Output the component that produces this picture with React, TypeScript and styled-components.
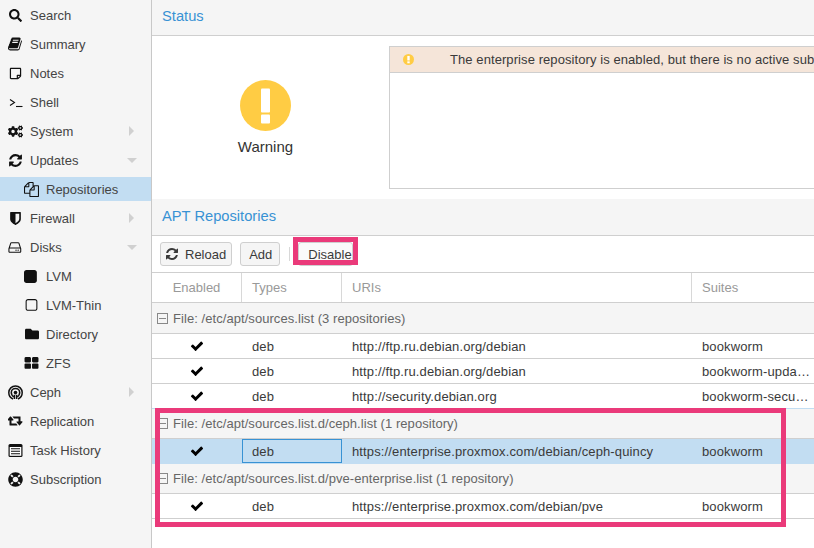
import React from 'react';
import styled, { createGlobalStyle } from 'styled-components';
import { FaSearch, FaRegStickyNote, FaCogs, FaFolder, FaLifeRing } from 'react-icons/fa';

const GlobalStyle = createGlobalStyle`
  html, body {
    margin: 0;
    height: 100%;
    overflow: hidden;
    background: #fff;
    font-family: "Liberation Sans", Arial, sans-serif;
    font-size: 13px;
    color: #3a3a3a;
  }
`;

const BOOK =
  'M1639 478q40 57 18 129l-275 906q-19 64-76.5 107.5t-122.5 43.5h-923q-77 0-148.5-53.5t-99.5-131.5q-24-67-2-127 0-4 3-27t4-37q1-8-3-21.5t-3-19.5q2-11 8-21t16.5-23.5 16.5-23.5q23-38 45-91.5t30-91.5q3-10 .5-30t-.5-28q3-11 17-28t17-23q21-36 42-92t25-90q1-9-2.5-32t.5-28q4-13 22-30.5t22-22.5q19-26 42.5-84.5t27.5-96.5q1-8-3-25.5t-2-26.5q2-8 9-18t18-23 17-21q8-12 16.5-30.5t15-35 16-36 19.5-32 26.5-23.5 36-11.5 47.5 5.5l-1 3q38-9 51-9h761q74 0 114 56t18 130l-274 906q-36 119-71.5 153.5t-128.5 34.5h-869q-27 0-38 15-11 16-1 43 24 70 144 70h923q29 0 56-15.5t35-41.5l300-987q7-22 5-57 38 15 59 43zm-1064 2q-4 13 2 22.5t20 9.5h608q13 0 25.5-9.5t16.5-22.5l21-64q4-13-2-22.5t-20-9.5h-608q-13 0-25.5 9.5t-16.5 22.5zm-83 256q-4 13 2 22.5t20 9.5h608q13 0 25.5-9.5t16.5-22.5l21-64q4-13-2-22.5t-20-9.5h-608q-13 0-25.5 9.5t-16.5 22.5z';
const REFRESH =
  'M1639 1056q0 5-1 7-64 268-268 434.5t-478 166.5q-146 0-282.5-55t-243.5-157l-129 129q-19 19-45 19t-45-19-19-45v-448q0-26 19-45t45-19h448q26 0 45 19t19 45-19 45l-137 137q71 66 161 102t187 36q134 0 250-65t186-179q11-17 53-117 8-23 30-23h192q13 0 22.5 9.5t9.5 22.5zm25-800v448q0 26-19 45t-45 19h-448q-26 0-45-19t-19-45 19-45l138-138q-148-137-349-137-134 0-250 65t-186 179q-11 17-53 117-8 23-30 23h-199q-13 0-22.5-9.5t-9.5-22.5v-7q65-268 270-434.5t480-166.5q146 0 284 55.5t245 156.5l130-129q19-19 45-19t45 19 19 45z';
const CHECK =
  'M1671 566q0 40-28 68l-724 724-136 136q-28 28-68 28t-68-28l-136-136-362-362q-28-28-28-68t28-68l136-136q28-28 68-28t68 28l294 295 656-657q28-28 68-28t68 28l136 136q28 28 28 68z';
const SHIELD =
  'M1344 960v-640h-448v1137q119-63 213-137 235-184 235-360zm192-768v768q0 86-33.5 170.5t-83 150-118 127.5-126.5 103-121 77.5-89.5 49.5-42.5 20q-12 6-26 6t-26-6q-16-7-42.5-20t-89.5-49.5-121-77.5-126.5-103-118-127.5-83-150-33.5-170.5v-768q0-26 19-45t45-19h1152q26 0 45 19t19 45z';
const FILES =
  'M1696 384q40 0 68 28t28 68v1216q0 40-28 68t-68 28h-960q-40 0-68-28t-28-68v-288h-544q-40 0-68-28t-28-68v-672q0-40 20-88t48-76l408-408q28-28 76-48t88-20h416q40 0 68 28t28 68v328q68-40 128-40h416zm-544 213l-299 299h299v-299zm-640-384l-299 299h299v-299zm196 647l316-316v-416h-384v416q0 40-28 68t-68 28h-416v640h512v-256q0-40 20-88t48-76zm956 804v-1152h-384v416q0 40-28 68t-68 28h-416v640h896z';
const HDD =
  'M1040 1216q0 33-23.5 56.5t-56.5 23.5-56.5-23.5-23.5-56.5 23.5-56.5 56.5-23.5 56.5 23.5 23.5 56.5zm256 0q0 33-23.5 56.5t-56.5 23.5-56.5-23.5-23.5-56.5 23.5-56.5 56.5-23.5 56.5 23.5 23.5 56.5zm160 160v-320q0-13-9.5-22.5t-22.5-9.5h-1216q-13 0-22.5 9.5t-9.5 22.5v320q0 13 9.5 22.5t22.5 9.5h1216q13 0 22.5-9.5t9.5-22.5zm-1230-480h1180l-157-482q-4-13-16-21.5t-26-8.5h-782q-14 0-26 8.5t-16 21.5zm1358 160v320q0 66-47 113t-113 47h-1216q-66 0-113-47t-47-113v-320q0-25 16-75l197-606q17-53 63-86t101-33h782q55 0 101 33t63 86l197 606q16 50 16 75z';
const SQUARE =
  'M1536 416v960q0 119-84.5 203.5t-203.5 84.5h-960q-119 0-203.5-84.5t-84.5-203.5v-960q0-119 84.5-203.5t203.5-84.5h960q119 0 203.5 84.5t84.5 203.5z';
const SQUARE_O =
  'M1312 256h-832q-66 0-113 47t-47 113v832q0 66 47 113t113 47h832q66 0 113-47t47-113v-832q0-66-47-113t-113-47zm288 160v832q0 119-84.5 203.5t-203.5 84.5h-832q-119 0-203.5-84.5t-84.5-203.5v-832q0-119 84.5-203.5t203.5-84.5h832q119 0 203.5 84.5t84.5 203.5z';
const RETWEET =
  'M1216 1424q0 13-9.5 22.5t-22.5 9.5h-960q-8 0-13.5-2t-9-7-5.5-6.5-3.5-10-1.5-11.5v-600h-192q-26 0-45-19t-19-45q0-24 15-41l320-384q19-22 49-22t49 22l320 384q15 17 15 41 0 26-19 45t-45 19h-192v384h576q16 0 25 11l160 192q7 10 7 21zm640-416q0 24-15 41l-320 384q-20 23-49 23t-49-23l-320-384q-15-17-15-41 0-26 19-45t45-19h192v-384h-576q-16 0-25-12l-160-192q-7-9-7-20 0-13 9.5-22.5t22.5-9.5h960q8 0 13.5 2t9 7 5.5 6.5 3.5 10 1.5 11.5v600h192q26 0 45 19t19 45z';
const TH_LARGE =
  'M832 1024v384q0 52-38 90t-90 38h-512q-52 0-90-38t-38-90v-384q0-52 38-90t90-38h512q52 0 90 38t38 90zm0-768v384q0 52-38 90t-90 38h-512q-52 0-90-38t-38-90v-384q0-52 38-90t90-38h512q52 0 90 38t38 90zm896 768v384q0 52-38 90t-90 38h-512q-52 0-90-38t-38-90v-384q0-52 38-90t90-38h512q52 0 90 38t38 90zm0-768v384q0 52-38 90t-90 38h-512q-52 0-90-38t-38-90v-384q0-52 38-90t90-38h512q52 0 90 38t38 90z';

const Fa4 = ({ d, size, box = 1792 }: { d: string; size: number; box?: number }) => (
  <svg width={(size * box) / 1792} height={size} viewBox={`0 0 ${box} 1792`} fill="currentColor">
    <path d={d} />
  </svg>
);

const TerminalIcon = () => (
  <svg width="14" height="14" viewBox="0 0 14 14" fill="none" stroke="#111">
    <path d="M1 4.5 5.5 7.5 1 10.5" strokeWidth="1.1" />
    <path d="M7 11.5h6.5" strokeWidth="1.1" />
  </svg>
);

const CephIcon = () => (
  <svg width="15" height="15" viewBox="0 0 15 15" fill="none" stroke="#111" strokeWidth="1.5">
    <path d="M5 14C2.4 13 .8 10.5.8 7.6.8 3.9 3.8.9 7.5.9s6.7 3 6.7 6.7c0 2.9-1.6 5.4-4.2 6.4" />
    <path d="M5.8 11.8C4.3 11 3.3 9.4 3.3 7.6 3.3 5.3 5.2 3.4 7.5 3.4s4.2 1.9 4.2 4.2c0 1.8-1 3.4-2.5 4.2" />
    <path d="M6.4 14V9.8M8.6 14V9.8" />
    <circle cx="7.5" cy="7.6" r="1.8" fill="#111" stroke="none" />
  </svg>
);

const ListIcon = () => (
  <svg width="15" height="13" viewBox="0 0 15 13">
    <rect x="0.5" y="0" width="14" height="13" rx="1.5" fill="#111" />
    <rect x="1.7" y="3" width="11.6" height="8.8" fill="#fff" />
    <path d="M3 4.8h9M3 7.2h9M3 9.7h9" stroke="#111" strokeWidth="1.1" />
  </svg>
);

const Layout = styled.div`
  display: flex;
  width: 814px;
  height: 548px;
  overflow: hidden;
`;

const Sidebar = styled.nav`
  flex: 0 0 151px;
  box-sizing: border-box;
  padding-top: 3px;
  background: #f5f5f5;
`;

const NavRow = styled.div<{ $sub?: boolean; $selected?: boolean }>`
  position: relative;
  display: flex;
  align-items: center;
  height: 24px;
  margin-bottom: 5px;
  padding-left: ${(p) => (p.$sub ? '24px' : '8px')};
  background: ${(p) => (p.$selected ? '#c2ddf2' : 'transparent')};
  color: #444;
`;

const NavIcon = styled.span`
  flex: 0 0 15px;
  width: 15px;
  margin-right: 7px;
  display: flex;
  justify-content: center;
  align-items: center;
  color: #111;
  font-size: 13px;
`;

const ArrowRight = styled.span`
  position: absolute;
  left: 129px;
  top: 7px;
  border-left: 5px solid #d0d0d0;
  border-top: 5px solid transparent;
  border-bottom: 5px solid transparent;
`;

const ArrowDown = styled.span`
  position: absolute;
  left: 127px;
  top: 10px;
  border-top: 5px solid #d0d0d0;
  border-left: 5px solid transparent;
  border-right: 5px solid transparent;
`;

const Main = styled.main`
  flex: 1;
  min-width: 0;
  border-left: 1px solid #c8c8c8;
  overflow: hidden;
`;

const PanelTitle = styled.div<{ $tall?: boolean }>`
  box-sizing: border-box;
  height: ${(p) => (p.$tall ? '37px' : '36px')};
  padding: 0 0 ${(p) => (p.$tall ? '3px' : '4px')} 10px;
  display: flex;
  align-items: center;
  background: #f5f5f5;
  border-bottom: 1px solid #cfcfcf;
  color: #3892d4;
  font-size: 14.7px;
`;

const StatusBody = styled.div`
  display: flex;
  height: 163px;
  box-sizing: border-box;
  padding-top: 10px;
`;

const StatusGauge = styled.div`
  flex: 0 0 237px;
  height: 143px;
  display: flex;
  flex-direction: column;
  align-items: center;
  justify-content: center;
  padding-right: 10px;
  box-sizing: border-box;
  font-size: 15px;
  color: #333;
`;

const GaugeCircle = styled.div`
  width: 51px;
  height: 51px;
  margin: 0 0 7px;
  display: flex;
`;

const MessageBox = styled.div`
  flex: 0 0 600px;
  height: 143px;
  box-sizing: border-box;
  border: 1px solid #cfcfcf;
`;

const MessageRow = styled.div`
  display: flex;
  align-items: center;
  height: 26px;
  box-sizing: border-box;
  background: #f5e5d9;
  border-bottom: 1px solid #cfcfcf;
  white-space: nowrap;
  letter-spacing: 0.08px;
`;

const MessageIcon = styled.span`
  flex: 0 0 60px;
  padding-left: 13px;
  box-sizing: border-box;
  display: flex;
`;

const Toolbar = styled.div`
  display: flex;
  align-items: flex-start;
  box-sizing: border-box;
  height: 37px;
  padding: 6px 8px 0;
  border-bottom: 1px solid #cfcfcf;
`;

const ToolButton = styled.button`
  display: flex;
  align-items: center;
  gap: 6px;
  box-sizing: border-box;
  height: 24px;
  padding: 0 7px 0 8px;
  margin-right: 8px;
  background: #f5f5f5;
  border: 1px solid #cfcfcf;
  border-radius: 3px;
  font: inherit;
  color: #3a3a3a;
`;

const ReloadButton = styled(ToolButton)`
  padding: 0 5px 0 4px;
`;

const ToolSeparator = styled.span`
  width: 1px;
  height: 14px;
  margin: 5px 8px 0 1px;
  background: #d8d8d8;
`;

const DisableButton = styled(ToolButton)`
  position: relative;
  width: 55px;
  margin: 0;
  padding: 0 0 0 9px;
  background: #fafafa;
  &::after {
    content: '';
    position: absolute;
    left: -6px;
    top: -6px;
    width: 65px;
    height: 28px;
    box-sizing: border-box;
    border: 5px solid #ea3a7a;
  }
`;

const GridRow = styled.div`
  display: grid;
  grid-template-columns: 90px 100px 350px 128px;
  box-sizing: border-box;
`;

const HeaderRow = styled(GridRow)`
  height: 30px;
  border-bottom: 1px solid #cfcfcf;
  color: #999;
`;

const HeaderCell = styled.div<{ $center?: boolean }>`
  display: flex;
  align-items: center;
  justify-content: ${(p) => (p.$center ? 'center' : 'flex-start')};
  padding-left: ${(p) => (p.$center ? '0' : '10px')};
  border-right: 1px solid #d8d8d8;
`;

const GroupRow = styled.div<{ $first?: boolean }>`
  display: flex;
  align-items: center;
  box-sizing: border-box;
  height: ${(p) => (p.$first ? '31px' : '30px')};
  padding: ${(p) => (p.$first ? '1px 0 0 5px' : '0 0 0 5px')};
  background: #f5f5f5;
  border-bottom: 1px solid #cfcfcf;
  color: #666;
  letter-spacing: 0.06px;
`;

const Expander = styled.span`
  position: relative;
  flex: 0 0 auto;
  box-sizing: border-box;
  width: 11px;
  height: 11px;
  margin-right: 5px;
  border: 1px solid #888;
  &::after {
    content: '';
    position: absolute;
    left: 1px;
    right: 1px;
    top: 4px;
    height: 1px;
    background: #888;
  }
`;

const DataRow = styled(GridRow)<{ $selected?: boolean; $blue?: boolean }>`
  height: 25px;
  background: ${(p) => (p.$selected ? '#c2ddf2' : '#fff')};
  border-bottom: 1px solid ${(p) => (p.$blue ? '#c2ddf2' : p.$selected ? 'transparent' : '#cfcfcf')};
`;

const Cell = styled.div<{ $focus?: boolean }>`
  box-sizing: border-box;
  min-width: 0;
  height: 24px;
  padding: ${(p) => (p.$focus ? '0 0 0 9px' : '1px 10px 0 10px')};
  line-height: 24px;
  white-space: nowrap;
  overflow: hidden;
  text-overflow: ellipsis;
  letter-spacing: 0.13px;
  border: ${(p) => (p.$focus ? '1px solid #3892d4' : '0')};
`;

const CheckCell = styled.div`
  display: flex;
  align-items: center;
  justify-content: center;
  height: 24px;
  color: #000;
`;

const HighlightArea = styled.div`
  position: relative;
`;

const HighlightFrame = styled.div`
  position: absolute;
  left: 3px;
  top: -1px;
  width: 631px;
  height: 119px;
  box-sizing: border-box;
  border: 5px solid #ea3a7a;
  pointer-events: none;
`;

const nav = [
  { label: 'Search', icon: <FaSearch /> },
  { label: 'Summary', icon: <Fa4 d={BOOK} size={16} /> },
  { label: 'Notes', icon: <FaRegStickyNote /> },
  { label: 'Shell', icon: <TerminalIcon /> },
  { label: 'System', icon: <FaCogs size={15} />, arrow: 'right' },
  { label: 'Updates', icon: <Fa4 d={REFRESH} size={15} />, arrow: 'down' },
  { label: 'Repositories', icon: <Fa4 d={FILES} size={15} />, sub: true, selected: true },
  { label: 'Firewall', icon: <Fa4 d={SHIELD} size={15} />, arrow: 'right' },
  { label: 'Disks', icon: <Fa4 d={HDD} size={15} />, arrow: 'down' },
  { label: 'LVM', icon: <Fa4 d={SQUARE} size={15} />, sub: true },
  { label: 'LVM-Thin', icon: <Fa4 d={SQUARE_O} size={15} />, sub: true },
  { label: 'Directory', icon: <FaFolder size={14} />, sub: true },
  { label: 'ZFS', icon: <Fa4 d={TH_LARGE} size={15} />, sub: true },
  { label: 'Ceph', icon: <CephIcon />, arrow: 'right' },
  { label: 'Replication', icon: <Fa4 d={RETWEET} size={14} box={1920} /> },
  { label: 'Task History', icon: <ListIcon /> },
  { label: 'Subscription', icon: <FaLifeRing size={15} /> },
];

const Check = () => (
  <CheckCell>
    <Fa4 d={CHECK} size={14} />
  </CheckCell>
);

const App = () => {
  return (
    <>
      <GlobalStyle />
      <Layout>
        <Sidebar>
          {nav.map((item) => (
            <NavRow key={item.label} $sub={item.sub} $selected={item.selected}>
              <NavIcon>{item.icon}</NavIcon>
              {item.label}
              {item.arrow === 'right' && <ArrowRight />}
              {item.arrow === 'down' && <ArrowDown />}
            </NavRow>
          ))}
        </Sidebar>
        <Main>
          <PanelTitle>Status</PanelTitle>
          <StatusBody>
            <StatusGauge>
              <GaugeCircle>
                <svg width="51" height="51" viewBox="0 0 51 51">
                  <circle cx="25.5" cy="25.5" r="25.5" fill="#ffcc44" />
                  <rect x="21" y="8.5" width="9" height="24" rx="1" fill="#fff" />
                  <rect x="21" y="34.5" width="9" height="9" rx="1" fill="#fff" />
                </svg>
              </GaugeCircle>
              Warning
            </StatusGauge>
            <MessageBox>
              <MessageRow>
                <MessageIcon>
                  <svg width="11" height="11" viewBox="0 0 51 51">
                    <circle cx="25.5" cy="25.5" r="25.5" fill="#ffcc44" />
                    <rect x="20" y="9" width="11" height="21" fill="#fff" />
                    <rect x="20" y="34" width="11" height="9" fill="#fff" />
                  </svg>
                </MessageIcon>
                The enterprise repository is enabled, but there is no active subscription!
              </MessageRow>
            </MessageBox>
          </StatusBody>
          <PanelTitle $tall>APT Repositories</PanelTitle>
          <Toolbar>
            <ReloadButton>
              <Fa4 d={REFRESH} size={14} />
              Reload
            </ReloadButton>
            <ToolButton>Add</ToolButton>
            <ToolSeparator />
            <DisableButton>Disable</DisableButton>
          </Toolbar>
          <HeaderRow>
            <HeaderCell $center>Enabled</HeaderCell>
            <HeaderCell>Types</HeaderCell>
            <HeaderCell>URIs</HeaderCell>
            <HeaderCell>Suites</HeaderCell>
          </HeaderRow>
          <GroupRow $first>
            <Expander />
            File: /etc/apt/sources.list (3 repositories)
          </GroupRow>
          <DataRow>
            <Check />
            <Cell>deb</Cell>
            <Cell>http://ftp.ru.debian.org/debian</Cell>
            <Cell>bookworm</Cell>
          </DataRow>
          <DataRow>
            <Check />
            <Cell>deb</Cell>
            <Cell>http://ftp.ru.debian.org/debian</Cell>
            <Cell>bookworm-updates</Cell>
          </DataRow>
          <DataRow $blue>
            <Check />
            <Cell>deb</Cell>
            <Cell>http://security.debian.org</Cell>
            <Cell>bookworm-security</Cell>
          </DataRow>
          <HighlightArea>
            <GroupRow>
              <Expander />
              File: /etc/apt/sources.list.d/ceph.list (1 repository)
            </GroupRow>
            <DataRow $selected>
              <Check />
              <Cell $focus>deb</Cell>
              <Cell>https://enterprise.proxmox.com/debian/ceph-quincy</Cell>
              <Cell>bookworm</Cell>
            </DataRow>
            <GroupRow>
              <Expander />
              File: /etc/apt/sources.list.d/pve-enterprise.list (1 repository)
            </GroupRow>
            <DataRow>
              <Check />
              <Cell>deb</Cell>
              <Cell>https://enterprise.proxmox.com/debian/pve</Cell>
              <Cell>bookworm</Cell>
            </DataRow>
            <HighlightFrame />
          </HighlightArea>
        </Main>
      </Layout>
    </>
  );
};

export default App;
